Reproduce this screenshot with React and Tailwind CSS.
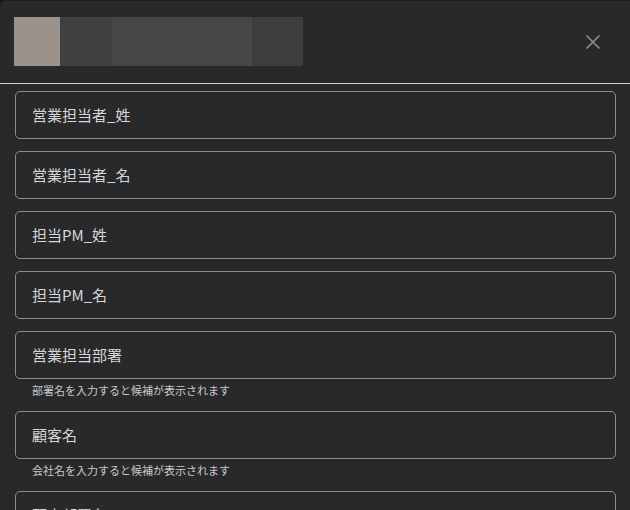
import React from "react";

const fields = [
  { label: "営業担当者_姓" },
  { label: "営業担当者_名" },
  { label: "担当PM_姓" },
  { label: "担当PM_名" },
  { label: "営業担当部署", help: "部署名を入力すると候補が表示されます" },
  { label: "顧客名", help: "会社名を入力すると候補が表示されます" },
  { label: "顧客部署名" },
];

function Field({ label, help }) {
  return (
    <div className="flex flex-col">
      <div className="h-[48px] rounded-[5px] border border-[#8c8c8e] flex items-center pl-[16px] text-[15px] text-[#d6d6d6]">
        {label}
      </div>
      {help && (
        <div className="h-[20px] leading-[22px] pl-[17px] text-[11px] text-[#c9c9c9]">
          {help}
        </div>
      )}
    </div>
  );
}

export default function App() {
  return (
    <div
      className="w-[630px] h-[510px] overflow-hidden bg-[#141516]"
      style={{ fontFamily: '"Noto Sans CJK JP", "Noto Sans", sans-serif' }}
    >
      <div className="h-full bg-[#28292b] rounded-tl-[6px] border-t border-[#1c1d1e] flex flex-col">
        <div className="h-[83px] shrink-0 flex items-center justify-between pl-[14px] pr-[29px] border-b border-[#d2d2d2]">
          <div className="flex h-[49px] -mt-[2px]">
            <div className="w-[46px] bg-[#9b928c]" />
            <div className="w-[52px] bg-[#3f4042]" />
            <div className="w-[140px] bg-[#464749]" />
            <div className="w-[51px] bg-[#3c3d3f]" />
          </div>
          <svg width="16" height="16" viewBox="0 0 16 16" className="text-[#8e8f92]">
            <path d="M1.5 1.5 L14.5 14.5 M14.5 1.5 L1.5 14.5" stroke="currentColor" strokeWidth="1.6" fill="none" />
          </svg>
        </div>
        <div className="flex flex-col gap-[12px] pt-[7px] pl-[15px] pr-[14px]">
          {fields.map((f) => (
            <Field key={f.label} {...f} />
          ))}
        </div>
      </div>
    </div>
  );
}
